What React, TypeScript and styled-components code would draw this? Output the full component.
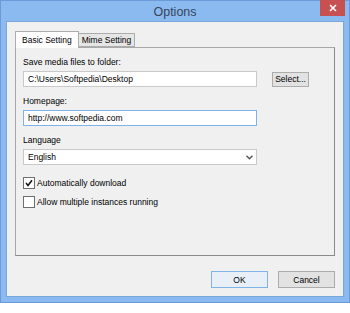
import React from 'react';
import styled, { createGlobalStyle } from 'styled-components';

const Global = createGlobalStyle`
  html, body {
    margin: 0;
    padding: 0;
    background: #ffffff;
  }
  body {
    font-family: "Liberation Sans", Arial, sans-serif;
    font-size: 8.5px;
    color: #000;
  }
`;

const Window = styled.div`
  width: 350px;
  height: 303px;
  box-sizing: border-box;
  background: #8bbaf1;
  border: 1px solid #6a9bd8;
  display: flex;
  flex-direction: column;
`;

const TitleBar = styled.div`
  height: 22px;
  display: flex;
  align-items: center;
  justify-content: center;
  position: relative;
  font-size: 12.5px;
  color: #36455a;
  padding-top: 1px;
  box-sizing: border-box;
`;

const CloseButton = styled.div`
  position: absolute;
  top: -1px;
  right: 4px;
  width: 25px;
  height: 16px;
  background: #c75050;
  display: flex;
  align-items: center;
  justify-content: center;
`;

const Client = styled.div`
  flex: 1;
  margin: 0 5px 5px 5px;
  background: #f0f0f0;
  border: 1px solid #79a6dc;
  display: flex;
  flex-direction: column;
  padding: 9px 8px 8px 8px;
`;

const TabStrip = styled.div`
  display: flex;
  align-items: flex-end;
  height: 16px;
  position: relative;
  z-index: 1;
`;

const Tab = styled.div<{ $active?: boolean }>`
  box-sizing: border-box;
  height: ${(p) => (p.$active ? '17px' : '14px')};
  padding: 0 ${(p) => (p.$active ? '6px' : '3px')};
  display: flex;
  align-items: center;
  background: ${(p) => (p.$active ? '#ffffff' : '#e6e6e6')};
  border: 1px solid #acacac;
  border-bottom: ${(p) => (p.$active ? 'none' : '1px solid #acacac')};
  margin-bottom: ${(p) => (p.$active ? '-1px' : '0')};
  ${(p) => (p.$active ? '' : 'border-left: none;')}
`;

const Panel = styled.div`
  box-sizing: border-box;
  height: 209px;
  border: 1px solid #a8a8a8;
  border-right-color: #8a8a8a;
  border-bottom-color: #8a8a8a;
  background: #f0f0f0;
  padding: 8px 7px;
  display: flex;
  flex-direction: column;
`;

const Field = styled.div`
  display: flex;
  flex-direction: column;
  margin-bottom: 8px;
`;

const Label = styled.div`
  height: 12px;
  line-height: 12px;
  margin-bottom: 3px;
`;

const Row = styled.div`
  display: flex;
  align-items: center;
  gap: 15px;
`;

const TextBox = styled.div<{ $focused?: boolean }>`
  box-sizing: border-box;
  width: 234px;
  height: 16px;
  background: #fff;
  border: 1px solid ${(p) => (p.$focused ? '#7db2ea' : '#c9c9c9')};
  display: flex;
  align-items: center;
  padding: 0 4px;
`;

const Dropdown = styled(TextBox)`
  justify-content: space-between;
  padding-right: 3px;
`;

const Button = styled.div<{ $default?: boolean; $w: number; $h: number }>`
  box-sizing: border-box;
  width: ${(p) => p.$w}px;
  height: ${(p) => p.$h}px;
  background: ${(p) => (p.$default ? '#e8eff7' : '#e2e2e2')};
  border: 1px solid ${(p) => (p.$default ? '#80b3e8' : '#acacac')};
  display: flex;
  align-items: center;
  justify-content: center;
`;

const CheckRow = styled.label<{ $first?: boolean }>`
  display: flex;
  align-items: center;
  gap: 2px;
  height: 13px;
  margin-top: ${(p) => (p.$first ? '3px' : '6px')};
`;

const Box = styled.div`
  box-sizing: border-box;
  width: 12px;
  height: 12px;
  background: #fff;
  border: 1px solid #6e6e6e;
  display: flex;
  align-items: center;
  justify-content: center;
`;

const Footer = styled.div`
  display: flex;
  justify-content: flex-end;
  gap: 10px;
  margin-top: 15px;
`;

const Check = () => (
  <svg width="8" height="8" viewBox="0 0 8 8">
    <path d="M1 4 L3 6.5 L7 1.2" stroke="#111" strokeWidth="1.5" fill="none" />
  </svg>
);

const Chevron = () => (
  <svg width="7" height="5" viewBox="0 0 7 5">
    <path d="M0.5 0.8 L3.5 3.8 L6.5 0.8" stroke="#555" strokeWidth="1.4" fill="none" />
  </svg>
);

export default function App() {
  return (
    <>
      <Global />
      <Window>
        <TitleBar>
          Options
          <CloseButton>
            <svg width="8" height="8" viewBox="0 0 8 8">
              <path d="M1 1 L7 7 M7 1 L1 7" stroke="#fff" strokeWidth="1.6" />
            </svg>
          </CloseButton>
        </TitleBar>
        <Client>
          <TabStrip>
            <Tab $active>Basic Setting</Tab>
            <Tab>Mime Setting</Tab>
          </TabStrip>
          <Panel>
            <Field>
              <Label>Save media files to folder:</Label>
              <Row>
                <TextBox>C:\Users\Softpedia\Desktop</TextBox>
                <Button $w={37} $h={15}>Select...</Button>
              </Row>
            </Field>
            <Field>
              <Label>Homepage:</Label>
              <TextBox $focused>http://www.softpedia.com</TextBox>
            </Field>
            <Field>
              <Label>Language</Label>
              <Dropdown>
                English
                <Chevron />
              </Dropdown>
            </Field>
            <CheckRow $first>
              <Box>
                <Check />
              </Box>
              Automatically download
            </CheckRow>
            <CheckRow>
              <Box />
              Allow multiple instances running
            </CheckRow>
          </Panel>
          <Footer>
            <Button $default $w={57} $h={17}>OK</Button>
            <Button $w={57} $h={17}>Cancel</Button>
          </Footer>
        </Client>
      </Window>
    </>
  );
}
